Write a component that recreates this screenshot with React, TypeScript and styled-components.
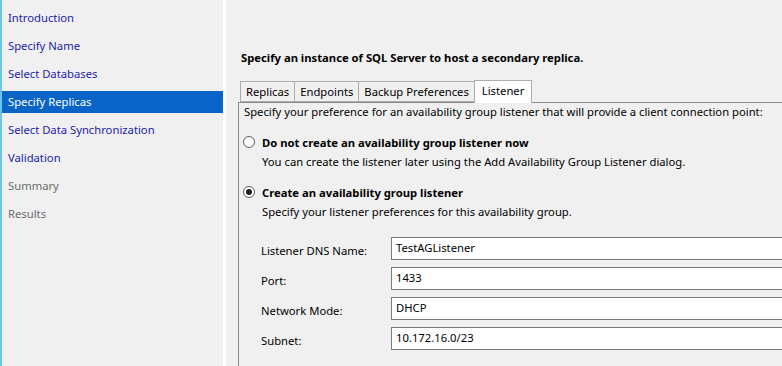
import React from "react";
import styled, { createGlobalStyle } from "styled-components";

const Global = createGlobalStyle`
  html, body { margin: 0; padding: 0; background: #f0f0f0; }
  body { font-family: "Noto Sans", "Open Sans", sans-serif; font-size: 11.25px; color: #000; }
  * { box-sizing: border-box; }
`;

const Page = styled.div`
  width: 782px;
  height: 366px;
  display: flex;
  overflow: hidden;
  background: #f0f0f0;
`;

const Sidebar = styled.nav`
  width: 223px;
  flex: none;
  border-left: 2px solid #6cc6ec;
  padding-top: 7px;
  display: flex;
  flex-direction: column;
  background: #f0f0f0;
`;

const NavItem = styled.div<{ $active?: boolean; $disabled?: boolean }>`
  height: 22px;
  margin-bottom: 6px;
  padding-left: 6px;
  line-height: 22px;
  white-space: nowrap;
  color: ${(p) => (p.$active ? "#ffffff" : p.$disabled ? "#6d6d6d" : "#1c1cab")};
  background: ${(p) => (p.$active ? "#0a64c8" : "transparent")};
`;

const Divider = styled.div`
  width: 3px;
  flex: none;
  background: #ffffff;
`;

const Main = styled.main`
  flex: 1;
  padding: 49px 0 0 12px;
  display: flex;
  flex-direction: column;
  min-width: 0;
`;

const Heading = styled.h1`
  margin: 0 0 13px 3px;
  font-size: 11.25px;
  font-weight: 700;
  line-height: 18px;
  white-space: nowrap;
`;

const TabStrip = styled.div`
  display: flex;
  align-items: flex-end;
  padding-left: 2px;
  height: 22px;
  position: relative;
  z-index: 1;
`;

const Tab = styled.div<{ $active?: boolean }>`
  height: ${(p) => (p.$active ? "23px" : "21px")};
  padding: 0 ${(p) => (p.$active ? "7px" : "5px")};
  line-height: 20px;
  border: 1px solid #adadad;
  border-bottom: ${(p) => (p.$active ? "none" : "1px solid #adadad")};
  margin-left: -1px;
  background: ${(p) => (p.$active ? "#ffffff" : "#f0f0f0")};
  white-space: nowrap;
  &:first-child { margin-left: 0; }
  margin-bottom: ${(p) => (p.$active ? "-1px" : "0")};
`;

const Panel = styled.section`
  flex: 1;
  border-top: 1px solid #898989;
  border-left: 1px solid #898989;
  margin-right: -2px;
  padding: 0 0 0 5px;
  display: flex;
  flex-direction: column;
`;

const Intro = styled.p`
  margin: 0;
  line-height: 17px;
  white-space: nowrap;
`;

const Option = styled.div<{ $gap: number }>`
  margin-top: ${(p) => p.$gap}px;
  display: flex;
  flex-direction: column;
`;

const OptionRow = styled.label`
  display: flex;
  align-items: center;
  gap: 7px;
  height: 18px;
  margin-left: -1px;
`;

const Radio = styled.span<{ $checked?: boolean }>`
  width: 12px;
  height: 12px;
  border-radius: 50%;
  border: 1px solid #5d5d5d;
  background: #ffffff;
  display: flex;
  align-items: center;
  justify-content: center;
  flex: none;
  &::after {
    content: "";
    width: 6px;
    height: 6px;
    border-radius: 50%;
    background: ${(p) => (p.$checked ? "#1f1f1f" : "transparent")};
  }
`;

const OptionTitle = styled.span`
  font-weight: 700;
  white-space: nowrap;
`;

const OptionHint = styled.div`
  margin: 2px 0 0 18px;
  line-height: 18px;
  white-space: nowrap;
`;

const Form = styled.div`
  margin: 16px 0 0 17px;
  display: grid;
  grid-template-columns: 130px 1fr;
  row-gap: 7px;
  align-items: center;
`;

const FieldLabel = styled.span`
  white-space: nowrap;
  padding-top: 3px;
`;

const Input = styled.div`
  height: 23px;
  border: 1px solid #7a7a7a;
  background: #ffffff;
  padding-left: 4px;
  line-height: 20px;
  white-space: nowrap;
`;

const steps = [
  { t: "Introduction" },
  { t: "Specify Name" },
  { t: "Select Databases" },
  { t: "Specify Replicas", active: true },
  { t: "Select Data Synchronization" },
  { t: "Validation" },
  { t: "Summary", disabled: true },
  { t: "Results", disabled: true },
];

const fields = [
  ["Listener DNS Name:", "TestAGListener"],
  ["Port:", "1433"],
  ["Network Mode:", "DHCP"],
  ["Subnet:", "10.172.16.0/23"],
];

export default function App() {
  return (
    <>
      <Global />
      <Page>
        <Sidebar>
          {steps.map((s) => (
            <NavItem key={s.t} $active={s.active} $disabled={s.disabled}>
              {s.t}
            </NavItem>
          ))}
        </Sidebar>
        <Divider />
        <Main>
          <Heading>Specify an instance of SQL Server to host a secondary replica.</Heading>
          <TabStrip>
            <Tab>Replicas</Tab>
            <Tab>Endpoints</Tab>
            <Tab>Backup Preferences</Tab>
            <Tab $active>Listener</Tab>
          </TabStrip>
          <Panel>
            <Intro>
              Specify your preference for an availability group listener that will provide a client connection point:
            </Intro>
            <Option $gap={13}>
              <OptionRow>
                <Radio />
                <OptionTitle>Do not create an availability group listener now</OptionTitle>
              </OptionRow>
              <OptionHint>You can create the listener later using the Add Availability Group Listener dialog.</OptionHint>
            </Option>
            <Option $gap={12}>
              <OptionRow>
                <Radio $checked />
                <OptionTitle>Create an availability group listener</OptionTitle>
              </OptionRow>
              <OptionHint>Specify your listener preferences for this availability group.</OptionHint>
            </Option>
            <Form>
              {fields.map(([l, v]) => (
                <React.Fragment key={l}>
                  <FieldLabel>{l}</FieldLabel>
                  <Input>{v}</Input>
                </React.Fragment>
              ))}
            </Form>
          </Panel>
        </Main>
      </Page>
    </>
  );
}
